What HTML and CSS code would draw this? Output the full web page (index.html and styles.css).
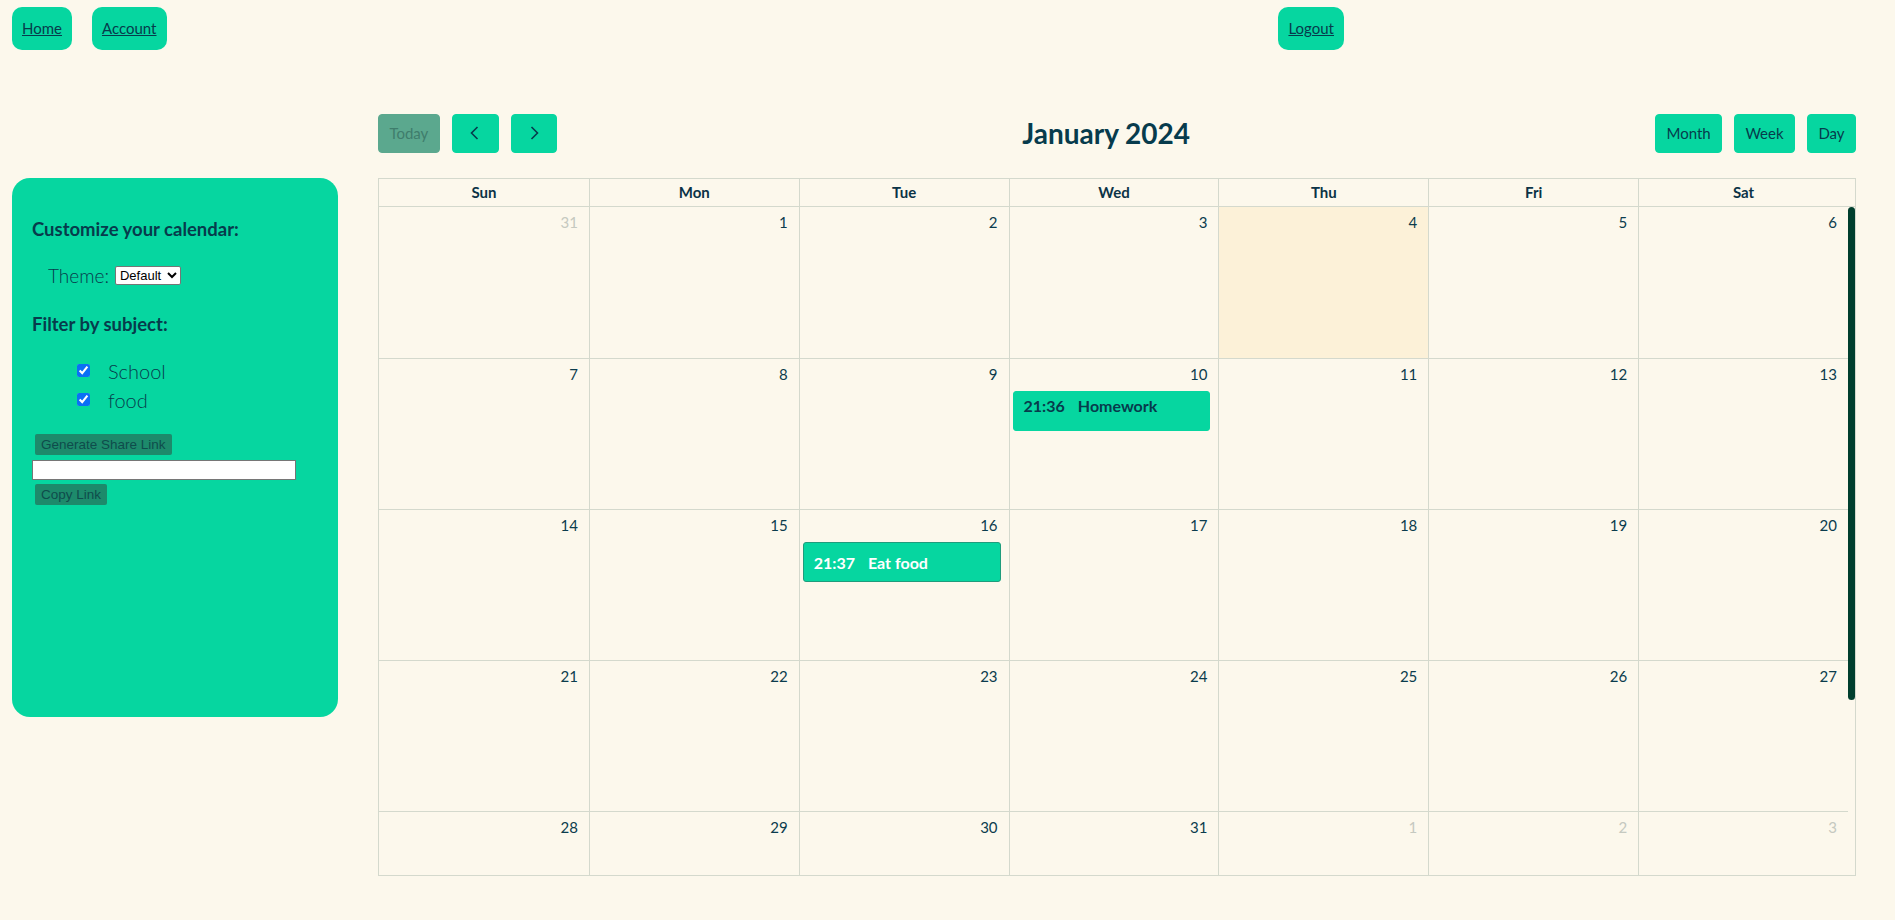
FILE: index.html
```html
<!DOCTYPE html>
<html lang="en">
<head>
<meta charset="utf-8">
<title>Calendar</title>
<link rel="stylesheet" href="styles.css">
</head>
<body>
<nav class="topnav">
  <div class="nav-left">
    <a class="nav-btn" href="#">Home</a>
    <a class="nav-btn" href="#">Account</a>
  </div>
  <a class="nav-btn" href="#">Logout</a>
</nav>
<main class="main">
  <aside class="sidebar">
    <h3 class="side-title">Customize your calendar:</h3>
    <div class="theme-row">
      <label class="theme-label" for="theme">Theme:</label>
      <select id="theme" class="theme-select"><option>Default</option></select>
    </div>
    <h3 class="side-title filter-title">Filter by subject:</h3>
    <ul class="filters">
      <li class="filter"><input type="checkbox" checked><span>School</span></li>
      <li class="filter"><input type="checkbox" checked><span>food</span></li>
    </ul>
    <button class="share-btn">Generate Share Link</button>
    <input class="share-input" type="text">
    <button class="share-btn">Copy Link</button>
  </aside>
  <section class="calendar">
    <div class="toolbar">
      <div class="tb-chunk">
        <button class="fc-btn today" disabled>Today</button>
        <button class="fc-btn icon-btn" aria-label="prev"><svg viewBox="0 0 24 24" width="24" height="24"><polyline points="14.5,6 8.5,12 14.5,18" fill="none" stroke="#073b4c" stroke-width="1.6"/></svg></button>
        <button class="fc-btn icon-btn" aria-label="next"><svg viewBox="0 0 24 24" width="24" height="24"><polyline points="9.5,6 15.5,12 9.5,18" fill="none" stroke="#073b4c" stroke-width="1.6"/></svg></button>
      </div>
      <h2 class="title">January 2024</h2>
      <div class="tb-chunk">
        <button class="fc-btn">Month</button>
        <button class="fc-btn">Week</button>
        <button class="fc-btn">Day</button>
      </div>
    </div>
    <div class="grid-wrap">
      <div class="head">
        <div class="hcell">Sun</div><div class="hcell">Mon</div><div class="hcell">Tue</div><div class="hcell">Wed</div><div class="hcell">Thu</div><div class="hcell">Fri</div><div class="hcell">Sat</div>
      </div>
      <div class="body">
        <div class="days">
          <div class="day other"><div class="num">31</div></div>
          <div class="day"><div class="num">1</div></div>
          <div class="day"><div class="num">2</div></div>
          <div class="day"><div class="num">3</div></div>
          <div class="day today-cell"><div class="num">4</div></div>
          <div class="day"><div class="num">5</div></div>
          <div class="day"><div class="num">6</div></div>

          <div class="day"><div class="num">7</div></div>
          <div class="day"><div class="num">8</div></div>
          <div class="day"><div class="num">9</div></div>
          <div class="day"><div class="num">10</div><div class="event"><span>21:36</span><span>Homework</span></div></div>
          <div class="day"><div class="num">11</div></div>
          <div class="day"><div class="num">12</div></div>
          <div class="day"><div class="num">13</div></div>

          <div class="day"><div class="num">14</div></div>
          <div class="day"><div class="num">15</div></div>
          <div class="day"><div class="num">16</div><div class="event event-food"><span>21:37</span><span>Eat food</span></div></div>
          <div class="day"><div class="num">17</div></div>
          <div class="day"><div class="num">18</div></div>
          <div class="day"><div class="num">19</div></div>
          <div class="day"><div class="num">20</div></div>

          <div class="day"><div class="num">21</div></div>
          <div class="day"><div class="num">22</div></div>
          <div class="day"><div class="num">23</div></div>
          <div class="day"><div class="num">24</div></div>
          <div class="day"><div class="num">25</div></div>
          <div class="day"><div class="num">26</div></div>
          <div class="day"><div class="num">27</div></div>

          <div class="day"><div class="num">28</div></div>
          <div class="day"><div class="num">29</div></div>
          <div class="day"><div class="num">30</div></div>
          <div class="day"><div class="num">31</div></div>
          <div class="day other"><div class="num">1</div></div>
          <div class="day other"><div class="num">2</div></div>
          <div class="day other"><div class="num">3</div></div>
        </div>
        <div class="gutter"><div class="thumb"></div></div>
      </div>
    </div>
  </section>
</main>
</body>
</html>
```

FILE: styles.css
```css
* { box-sizing: border-box; }

body {
  margin: 0;
  background: #fcf8ec;
  font-family: Lato, "Noto Sans", sans-serif;
  color: #073b4c;
}

.topnav {
  display: flex;
  justify-content: space-between;
  align-items: flex-start;
  width: 1344px;
  padding: 7px 0 0 12px;
}

.nav-left {
  display: flex;
  gap: 20px;
}

.nav-btn {
  display: inline-block;
  background: #06d6a0;
  border-radius: 10px;
  padding: 10px;
  font-size: 15px;
  line-height: 23px;
  color: #073b4c;
  text-decoration: underline;
}

.main {
  display: flex;
  align-items: flex-start;
  gap: 40px;
  margin-top: 64px;
  padding: 0 39px 0 12px;
}

/* Sidebar */
.sidebar {
  flex: none;
  width: 326px;
  height: 539px;
  margin-top: 64px;
  background: #06d6a0;
  border-radius: 18px;
  padding: 38px 20px 20px;
}

.side-title {
  margin: 0;
  font-size: 18.5px;
  line-height: 26px;
  font-weight: 700;
  color: #073b4c;
}

.theme-row {
  display: flex;
  align-items: center;
  gap: 6px;
  margin-top: 19px;
  padding-left: 16px;
  height: 28px;
}

.theme-label {
  font-size: 19px;
  font-weight: 300;
}

.theme-select {
  font-family: "Liberation Sans", Arial, sans-serif;
  font-size: 13px;
  height: 19px;
  width: 66px;
  padding: 0;
  border: 1px solid #767676;
  border-radius: 2px;
  background: #fff;
  color: #000;
}

.filter-title {
  margin-top: 22px;
}

.filters {
  list-style: none;
  margin: 19px 0 0;
  padding: 0 0 0 45px;
}

.filter {
  display: flex;
  align-items: center;
  height: 29px;
  font-size: 20px;
  font-weight: 300;
}

.filter input {
  width: 13px;
  height: 13px;
  margin: 0 18px 0 0;
  accent-color: #0b6ff5;
}

.share-btn {
  display: block;
  margin: 20px 0 0 3px;
  font-family: "Liberation Sans", Arial, sans-serif;
  font-size: 13.5px;
  line-height: 17px;
  padding: 2px 6px;
  border: none;
  border-radius: 2px;
  background: #1d8a6b;
  color: #0f4c4c;
}

.share-input {
  display: block;
  width: 264px;
  height: 20px;
  margin: 5px 0 4px;
  border: 1px solid #767676;
  background: #fff;
}

.share-input + .share-btn {
  margin-top: 0;
}

/* Calendar */
.calendar {
  flex: 1;
  min-width: 0;
}

.toolbar {
  display: flex;
  justify-content: space-between;
  align-items: center;
  margin-bottom: 25px;
}

.tb-chunk {
  display: flex;
  gap: 12px;
}

.fc-btn {
  font-family: Lato, "Noto Sans", sans-serif;
  font-size: 15px;
  line-height: 24px;
  padding: 6.4px 10.4px;
  border: 1px solid #06d6a0;
  border-radius: 4px;
  background: #06d6a0;
  color: #073b4c;
}

.fc-btn.today {
  background: #5ba88e;
  border-color: #5ba88e;
  color: #3f7d6c;
}

.icon-btn svg {
  display: block;
}

.title {
  margin: 0;
  font-size: 28px;
  font-weight: 700;
  color: #073b4c;
}

.grid-wrap {
  border: 1px solid #d4d9cd;
}

.head {
  display: grid;
  grid-template-columns: repeat(7, 1fr);
  padding-right: 7px;
  border-bottom: 1px solid #d4d9cd;
}

.hcell {
  text-align: center;
  font-size: 15px;
  font-weight: 700;
  line-height: 23px;
  padding: 2px 4px;
  color: #0b3346;
}

.hcell + .hcell {
  border-left: 1px solid #d4d9cd;
}

.body {
  display: flex;
  height: 668px;
  overflow: hidden;
}

.days {
  flex: 1;
  display: grid;
  grid-template-columns: repeat(7, 1fr);
  grid-auto-rows: 151px;
}

.day {
  border-left: 1px solid #d4d9cd;
  border-top: 1px solid #d4d9cd;
}

.day:nth-child(7n+1) {
  border-left: none;
}

.day:nth-child(-n+7) {
  border-top: none;
}

.today-cell {
  background: #fcf1d8;
}

.num {
  text-align: right;
  padding: 5px 11px 0 0;
  font-size: 15px;
  line-height: 20px;
  color: #0b3c4d;
}

.other .num {
  color: #c5c9c0;
}

.event {
  display: flex;
  gap: 13px;
  margin: 7px 8px 0 3px;
  padding: 3px 10px 13px;
  background: #06d6a0;
  border: 1px solid #06d6a0;
  border-radius: 3px;
  font-size: 16px;
  font-weight: 700;
  line-height: 22px;
  color: #073b4c;
}

.event-food {
  padding: 9px 10px 7px;
  border-color: #1f9c7c;
  color: #ffffff;
}

.gutter {
  flex: none;
  width: 7px;
}

.thumb {
  height: 493px;
  background: #003f2e;
  border-radius: 4px;
}
```
